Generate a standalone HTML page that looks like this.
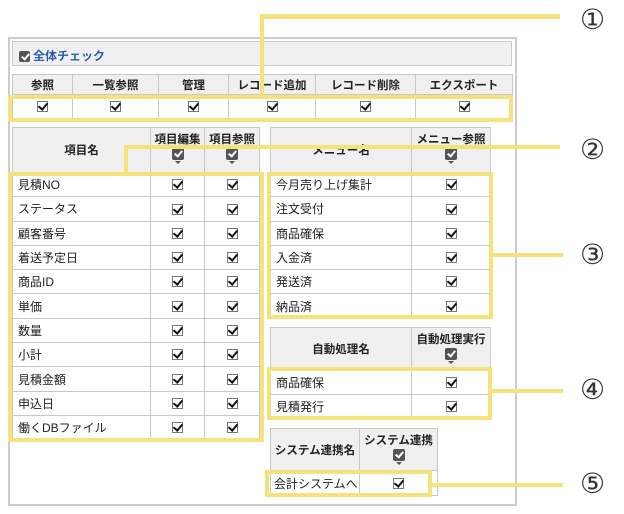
<!DOCTYPE html>
<html><head><meta charset="utf-8"><style>
*{margin:0;padding:0;box-sizing:border-box}
body{width:624px;height:514px;background:#fff;position:relative;overflow:hidden;font-family:"Liberation Sans","Noto Sans CJK JP",sans-serif;color:#222}
.abs{position:absolute}
table{position:absolute;border-collapse:collapse;table-layout:fixed;font-size:11px}
td,th{border:1px solid #c8c8c8;padding:0;text-align:center;vertical-align:middle}
th{background:#f0f0f0;font-weight:bold;font-size:11.5px;white-space:nowrap}
td.l{text-align:left;padding-left:5px;font-size:12px;white-space:nowrap}
.cb{display:inline-block;width:11px;height:11px;border:1px solid #777;background:#fff;position:relative;vertical-align:middle}
.cb:after{content:"";position:absolute;left:2px;top:-1px;width:4px;height:7px;border:solid #111;border-width:0 2px 2px 0;transform:rotate(40deg)}
.hc{display:block;margin:1px auto 0;width:12px;height:12px;background:#555;border-radius:2px;position:relative}
.hc:after{content:"";position:absolute;left:4px;top:1px;width:3px;height:6px;border:solid #fff;border-width:0 2px 2px 0;transform:rotate(40deg)}
.tri{display:block;margin:1px auto 0;width:0;height:0;border-left:3px solid transparent;border-right:3px solid transparent;border-top:3px solid #555}
.y{position:absolute;background:#f4e27a}
.yb{position:absolute;border:4px solid #f4e27a}
.n{position:absolute;font-size:28px;line-height:28px;color:#333;font-family:"DejaVu Sans",sans-serif}
</style></head><body>
<div class="abs" style="left:8px;top:37px;width:509px;height:469px;border:2px solid #ccc"></div>
<div class="abs" style="left:12px;top:41px;width:500px;height:25px;background:#f0f0f0;border:1px solid #ccc;font-size:12px;font-weight:bold;color:#2a5db0;padding:5px 0 0 6px"><span class="hc" style="display:inline-block;vertical-align:-2px;margin:0 3px 0 0;width:11px;height:11px"></span>全体チェック</div>

<table style="left:12px;top:74px;width:500px">
<colgroup><col style="width:60px"><col style="width:86px"><col style="width:70px"><col style="width:87px"><col style="width:100px"><col style="width:97px"></colgroup>
<tr style="height:20px"><th>参照</th><th>一覧参照</th><th>管理</th><th>レコード追加</th><th>レコード削除</th><th>エクスポート</th></tr>
<tr style="height:24px"><td><span class="cb"></span></td><td><span class="cb"></span></td><td><span class="cb"></span></td><td><span class="cb"></span></td><td><span class="cb"></span></td><td><span class="cb"></span></td></tr>
</table>

<table style="left:12px;top:127px;width:247px">
<colgroup><col style="width:138px"><col style="width:54px"><col style="width:55px"></colgroup>
<tr style="height:45px"><th>項目名</th><th style="vertical-align:top;padding-top:3px">項目編集<span class="hc"></span><span class="tri"></span></th><th style="vertical-align:top;padding-top:3px">項目参照<span class="hc"></span><span class="tri"></span></th></tr>
<tr style="height:24.3px"><td class="l">見積NO</td><td><span class="cb"></span></td><td><span class="cb"></span></td></tr>
<tr style="height:24.3px"><td class="l">ステータス</td><td><span class="cb"></span></td><td><span class="cb"></span></td></tr>
<tr style="height:24.3px"><td class="l">顧客番号</td><td><span class="cb"></span></td><td><span class="cb"></span></td></tr>
<tr style="height:24.3px"><td class="l">着送予定日</td><td><span class="cb"></span></td><td><span class="cb"></span></td></tr>
<tr style="height:24.3px"><td class="l">商品ID</td><td><span class="cb"></span></td><td><span class="cb"></span></td></tr>
<tr style="height:24.3px"><td class="l">単価</td><td><span class="cb"></span></td><td><span class="cb"></span></td></tr>
<tr style="height:24.3px"><td class="l">数量</td><td><span class="cb"></span></td><td><span class="cb"></span></td></tr>
<tr style="height:24.3px"><td class="l">小計</td><td><span class="cb"></span></td><td><span class="cb"></span></td></tr>
<tr style="height:24.3px"><td class="l">見積金額</td><td><span class="cb"></span></td><td><span class="cb"></span></td></tr>
<tr style="height:24.3px"><td class="l">申込日</td><td><span class="cb"></span></td><td><span class="cb"></span></td></tr>
<tr style="height:24.3px"><td class="l">働くDBファイル</td><td><span class="cb"></span></td><td><span class="cb"></span></td></tr>
</table>

<table style="left:270px;top:127px;width:220px">
<colgroup><col style="width:141px"><col style="width:79px"></colgroup>
<tr style="height:45px"><th>メニュー名</th><th style="vertical-align:top;padding-top:3px">メニュー参照<span class="hc"></span><span class="tri"></span></th></tr>
<tr style="height:24.3px"><td class="l">今月売り上げ集計</td><td><span class="cb"></span></td></tr>
<tr style="height:24.3px"><td class="l">注文受付</td><td><span class="cb"></span></td></tr>
<tr style="height:24.3px"><td class="l">商品確保</td><td><span class="cb"></span></td></tr>
<tr style="height:24.3px"><td class="l">入金済</td><td><span class="cb"></span></td></tr>
<tr style="height:24.3px"><td class="l">発送済</td><td><span class="cb"></span></td></tr>
<tr style="height:24.3px"><td class="l">納品済</td><td><span class="cb"></span></td></tr>
</table>

<table style="left:270px;top:327px;width:220px">
<colgroup><col style="width:141px"><col style="width:79px"></colgroup>
<tr style="height:43px"><th>自動処理名</th><th style="vertical-align:top;padding-top:3px">自動処理実行<span class="hc"></span><span class="tri"></span></th></tr>
<tr style="height:24px"><td class="l">商品確保</td><td><span class="cb"></span></td></tr>
<tr style="height:24px"><td class="l">見積発行</td><td><span class="cb"></span></td></tr>
</table>

<table style="left:270px;top:428px;width:167px">
<colgroup><col style="width:89px"><col style="width:78px"></colgroup>
<tr style="height:42px"><th>システム連携名</th><th style="vertical-align:top;padding-top:3px">システム連携<span class="hc"></span><span class="tri"></span></th></tr>
<tr style="height:25px"><td class="l" style="padding-left:3px">会計システムへ</td><td><span class="cb"></span></td></tr>
</table>

<div class="yb" style="left:8px;top:95px;width:505px;height:27px"></div>
<div class="y" style="left:260px;top:14px;width:4px;height:82px"></div>
<div class="y" style="left:260px;top:14px;width:300px;height:5px"></div>
<div class="n" style="left:580px;top:6px">①</div>

<div class="yb" style="left:8px;top:172px;width:256px;height:270px"></div>
<div class="y" style="left:124px;top:145px;width:4px;height:30px"></div>
<div class="y" style="left:124px;top:145px;width:436px;height:4px"></div>
<div class="n" style="left:580px;top:136px">②</div>

<div class="yb" style="left:267px;top:172px;width:226px;height:147px"></div>
<div class="y" style="left:493px;top:253px;width:70px;height:4px"></div>
<div class="n" style="left:580px;top:241px">③</div>

<div class="yb" style="left:267px;top:367px;width:225px;height:53px"></div>
<div class="y" style="left:492px;top:389px;width:71px;height:4px"></div>
<div class="n" style="left:580px;top:376px">④</div>

<div class="yb" style="left:265px;top:470px;width:167px;height:27px"></div>
<div class="y" style="left:432px;top:483px;width:131px;height:4px"></div>
<div class="n" style="left:580px;top:470px">⑤</div>
</body></html>
